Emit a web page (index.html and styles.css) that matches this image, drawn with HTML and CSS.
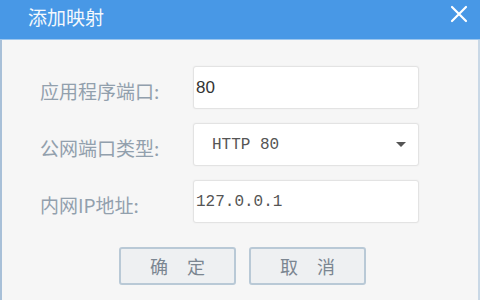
FILE: index.html
```
<!DOCTYPE html>
<html lang="zh-CN">

<head>
    <meta charset="UTF-8">
    <meta name="viewport" content="width=device-width, initial-scale=1.0">
    <title>添加映射</title>
    <link rel="stylesheet" href="styles.css">
</head>

<body>
    <div class="dialog">
        <div class="titlebar">
            <span class="title">添加映射</span>
            <svg class="close" width="18" height="18" viewBox="0 0 18 18">
                <path d="M2 2 L16 16 M16 2 L2 16" stroke="#ffffff" stroke-width="2.2" fill="none" stroke-linecap="round"/>
            </svg>
        </div>

        <div class="content">
            <div class="row">
                <label class="label">应用程序端口:</label>
                <input class="field" type="text" value="80">
            </div>
            <div class="row">
                <label class="label">公网端口类型:</label>
                <div class="field select">
                    <span class="mono">HTTP 80</span>
                    <span class="arrow"></span>
                </div>
            </div>
            <div class="row">
                <label class="label">内网IP地址:</label>
                <input class="field mono" type="text" value="127.0.0.1">
            </div>

            <div class="buttons">
                <button class="btn">确定</button>
                <button class="btn">取消</button>
            </div>
        </div>
    </div>
</body>

</html>
```

FILE: styles.css
```
body {
    margin: 0;
    width: 480px;
    height: 300px;
    overflow: hidden;
    font-family: "Noto Sans CJK SC", "Noto Sans", sans-serif;
    background-color: #f6f6f6;
}

.dialog {
    height: 300px;
    display: flex;
    flex-direction: column;
    border-right: 2px solid #c9d8e6;
    border-left: 2px solid #a8c0d8;
    box-sizing: border-box;
}

.titlebar {
    height: 40px;
    flex-shrink: 0;
    background-color: #4898e6;
    border-bottom: 1px solid #9cc6ee;
    margin: 0 -2px;
    display: flex;
    align-items: center;
    justify-content: space-between;
    padding: 0 12px 6px 28px;
    box-sizing: border-box;
}

.title {
    color: #f4f8fd;
    font-size: 19px;
    line-height: 1;
}

.close {
    margin-top: -6px;
}

.content {
    flex: 1;
    background-color: #f6f6f6;
    padding: 26px 0 0 38px;
    display: flex;
    flex-direction: column;
    gap: 14px;
}

.row {
    display: flex;
    align-items: center;
}

.label {
    width: 153px;
    font-size: 19px;
    color: #92a0ad;
    padding-top: 5px;
}

.field {
    width: 226px;
    height: 43px;
    box-sizing: border-box;
    background: #ffffff;
    border: 1px solid #e3e3e3;
    border-radius: 3px;
    box-shadow: 0 0 2px rgba(0, 0, 0, 0.06);
    padding: 0 0 0 2px;
    font-family: "Liberation Sans", Arial, sans-serif;
    font-size: 17px;
    color: #333333;
    outline: none;
}

.mono {
    font-family: "Liberation Mono", "Courier New", monospace;
    font-size: 16px;
    color: #555555;
}

.select {
    display: flex;
    align-items: center;
    justify-content: space-between;
    padding: 0 12px 0 18px;
}

.arrow {
    width: 0;
    height: 0;
    border-left: 5px solid transparent;
    border-right: 5px solid transparent;
    border-top: 5px solid #555555;
}

.buttons {
    display: flex;
    gap: 13px;
    margin-top: 10px;
    padding-left: 79px;
}

.btn {
    width: 117px;
    height: 38px;
    background-color: #eef0f2;
    border: 2px solid #b9c9d6;
    border-radius: 3px;
    font-family: "Noto Sans CJK SC", sans-serif;
    font-size: 18px;
    color: #7b8691;
    letter-spacing: 19px;
    text-indent: 19px;
    padding: 0;
    cursor: pointer;
}
```
